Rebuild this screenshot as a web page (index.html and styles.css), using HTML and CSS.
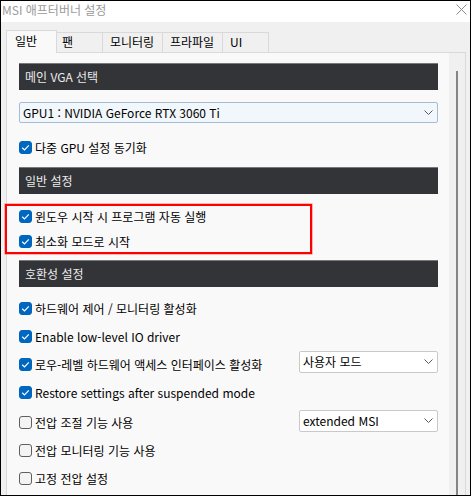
FILE: index.html
```html
<!DOCTYPE html>
<html lang="ko">
<head>
<meta charset="utf-8">
<title>MSI 애프터버너 설정</title>
<link rel="stylesheet" href="styles.css">
</head>
<body>
<div class="window">
  <div class="titlebar">
    <span class="title">MSI 애프터버너 설정</span>
    <svg class="close" width="11" height="11" viewBox="0 0 11 11"><path d="M0.5 0.5 L10.5 10.5 M10.5 0.5 L0.5 10.5" stroke="#8a8a8a" stroke-width="1" fill="none"/></svg>
  </div>
  <div class="body">
    <div class="tabs">
      <div class="tab active">일반</div>
      <div class="tab fan">팬</div>
      <div class="tab mon">모니터링</div>
      <div class="tab prof">프라파일</div>
      <div class="tab ui">UI</div>
    </div>
    <div class="panel">
      <div class="content">
        <div class="section">메인 VGA 선택</div>
        <div class="select gpu"><span>GPU1 : NVIDIA GeForce RTX 3060 Ti</span><svg class="chev" width="9" height="5" viewBox="0 0 9 5"><path d="M0.5 0.5 L4.5 4.5 L8.5 0.5" stroke="#5a5a5a" fill="none"/></svg></div>
        <div class="row sync"><span class="cb on"><svg width="13" height="13" viewBox="0 0 13 13"><path d="M3.2 6.8 L5.5 9 L9.8 4.4" stroke="#fff" stroke-width="1.2" fill="none"/></svg></span><span>다중 GPU 설정 동기화</span></div>

        <div class="section s2">일반 설정</div>
        <div class="group">
          <div class="row short"><span class="cb on"><svg width="13" height="13" viewBox="0 0 13 13"><path d="M3.2 6.8 L5.5 9 L9.8 4.4" stroke="#fff" stroke-width="1.2" fill="none"/></svg></span><span>윈도우 시작 시 프로그램 자동 실행</span></div>
          <div class="row short"><span class="cb on"><svg width="13" height="13" viewBox="0 0 13 13"><path d="M3.2 6.8 L5.5 9 L9.8 4.4" stroke="#fff" stroke-width="1.2" fill="none"/></svg></span><span>최소화 모드로 시작</span></div>
        </div>

        <div class="section s3">호환성 설정</div>
        <div class="list">
          <div class="row"><span class="cb on"><svg width="13" height="13" viewBox="0 0 13 13"><path d="M3.2 6.8 L5.5 9 L9.8 4.4" stroke="#fff" stroke-width="1.2" fill="none"/></svg></span><span>하드웨어 제어 / 모니터링 활성화</span></div>
          <div class="row"><span class="cb on"><svg width="13" height="13" viewBox="0 0 13 13"><path d="M3.2 6.8 L5.5 9 L9.8 4.4" stroke="#fff" stroke-width="1.2" fill="none"/></svg></span><span>Enable low-level IO driver</span></div>
          <div class="row"><span class="cb on"><svg width="13" height="13" viewBox="0 0 13 13"><path d="M3.2 6.8 L5.5 9 L9.8 4.4" stroke="#fff" stroke-width="1.2" fill="none"/></svg></span><span class="label">로우-레벨 하드웨어 액세스 인터페이스 활성화</span>
            <div class="select mini up5"><span>사용자 모드</span><svg class="chev" width="9" height="5" viewBox="0 0 9 5"><path d="M0.5 0.5 L4.5 4.5 L8.5 0.5" stroke="#5a5a5a" fill="none"/></svg></div>
          </div>
          <div class="row"><span class="cb on"><svg width="13" height="13" viewBox="0 0 13 13"><path d="M3.2 6.8 L5.5 9 L9.8 4.4" stroke="#fff" stroke-width="1.2" fill="none"/></svg></span><span>Restore settings after suspended mode</span></div>
          <div class="row volt"><span class="cb"></span><span class="label">전압 조절 기능 사용</span>
            <div class="select mini up3"><span>extended MSI</span><svg class="chev" width="9" height="5" viewBox="0 0 9 5"><path d="M0.5 0.5 L4.5 4.5 L8.5 0.5" stroke="#5a5a5a" fill="none"/></svg></div>
          </div>
          <div class="row"><span class="cb"></span><span>전압 모니터링 기능 사용</span></div>
          <div class="row"><span class="cb"></span><span>고정 전압 설정</span></div>
        </div>
      </div>
      <div class="scrollbar"><div class="thumb"></div></div>
    </div>
  </div>
  <div class="highlight"></div>
</div>
</body>
</html>
```
FILE: styles.css
```css
* { box-sizing: border-box; }
html, body { margin: 0; padding: 0; background: #fff; }
body {
  font-family: "Noto Sans CJK KR", "Noto Sans", sans-serif;
  font-size: 12px;
  color: #000;
}
.window {
  position: relative;
  width: 471px;
  height: 496px;
  border: 1px solid #000;
  background: #f0f0f0;
  overflow: hidden;
  display: flex;
  flex-direction: column;
}
.titlebar {
  height: 21px;
  flex: none;
  background: #fff;
  display: flex;
  align-items: center;
  justify-content: space-between;
  padding: 0 3px 0 1px;
}
.title {
  font-size: 12px;
  color: #9a9a9a;
  line-height: 16px;
  margin-bottom: 4px;
}
.close { margin-top: -4px; }
.body {
  flex: 1;
  min-height: 0;
  padding: 8px 0 0 5px;
}
.tabs {
  display: flex;
  align-items: flex-end;
  height: 22px;
}
.tab {
  height: 20px;
  border: 1px solid #d9d9d9;
  border-bottom: none;
  border-left: none;
  background: #f0f0f0;
  line-height: 18px;
  padding-left: 7px;
}
.tab.active {
  width: 51px;
  height: 23px;
  margin-bottom: -1px;
  background: #f9f9f9;
  border-left: 1px solid #d9d9d9;
  padding-left: 8px;
  line-height: 20px;
  position: relative;
  z-index: 1;
}
.tab.fan { width: 46px; padding-left: 5px; }
.tab.mon { width: 60px; }
.tab.prof { width: 60px; }
.tab.ui { width: 46px; }

.panel {
  width: 460px;
  height: 460px;
  border: 1px solid #d9d9d9;
  background: #f9f9f9;
  display: flex;
}
.content {
  width: 442px;
  padding: 10px 11px 0 12px;
}
.scrollbar {
  width: 16px;
  background: #f0f0f0;
  padding: 18px 0 0 7px;
}
.thumb {
  width: 2px;
  height: 100%;
  background: #858585;
}
.section {
  height: 27px;
  background: #333438;
  border-top: 1px solid #77787b;
  color: #ebebeb;
  padding-left: 6px;
  line-height: 25px;
}
.s2 { margin-top: 6px; }
.s3 { margin-top: 6px; }
.select {
  height: 21px;
  border: 1px solid #c9c9c9;
  border-radius: 2px;
  background: #fff;
  display: flex;
  align-items: center;
  justify-content: space-between;
  padding: 0 4px 0 3px;
}
.select.gpu {
  margin-top: 12px;
  background: #f2f7fc;
  border-color: #a4bdd6;
}
.select.mini {
  width: 139px;
  height: 22px;
  flex: none;
  margin-left: auto;
}
.up5 { margin-bottom: 5px; }
.up3 { margin-bottom: 3px; }
.chev { display: block; }
.row {
  height: 28px;
  display: flex;
  align-items: center;
}
.row.sync { margin-top: 10px; }
.group { margin-top: 10px; }
.row.short { height: 25px; }
.list { margin-top: 7px; }
.row.volt { margin-top: 2px; }
.cb {
  width: 13px;
  height: 13px;
  flex: none;
  border-radius: 3px;
  border: 1px solid #5f5f5f;
  background: #f4f4f4;
  margin-right: 3px;
  position: relative;
}
.cb.on {
  background: #0067c0;
  border-color: #0067c0;
}
.cb svg {
  position: absolute;
  left: -1px;
  top: -1px;
}
.highlight {
  position: absolute;
  left: 4px;
  top: 203px;
  width: 307px;
  height: 50px;
  border: 2px solid #ff0000;
  box-shadow: 0 0 0 0.6px rgba(255, 0, 0, 0.45);
  pointer-events: none;
}
```
